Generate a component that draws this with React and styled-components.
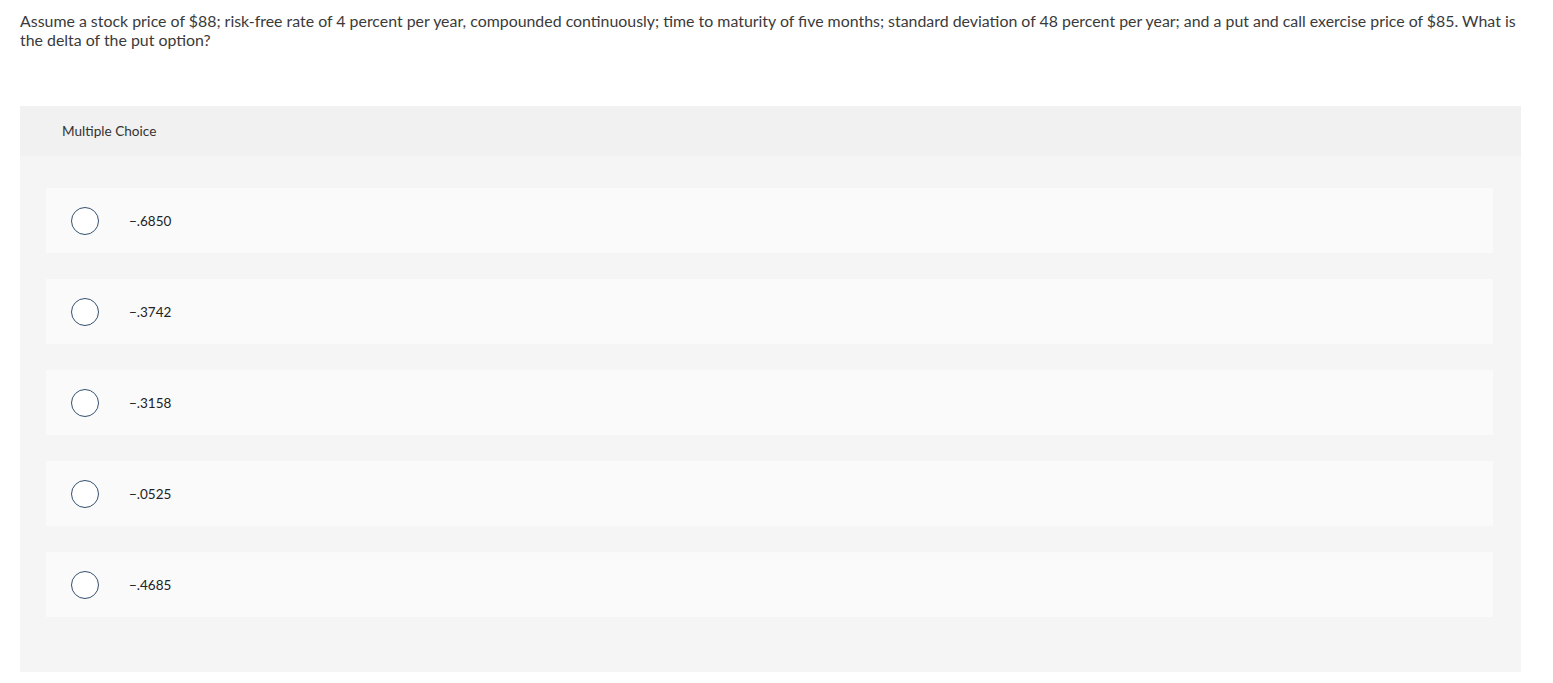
import React from "react";
import styled, { createGlobalStyle } from "styled-components";

const Global = createGlobalStyle`
  body {
    margin: 0;
    background: #fff;
    font-family: Lato, "Open Sans", "Liberation Sans", sans-serif;
    color: #333;
  }
`;

const Page = styled.div`
  padding: 11px 32px 11px 20px;
`;

const Question = styled.p`
  margin: 0 -4px 0 0;
  font-size: 15.9px;
  line-height: 19px;
  color: #3a3a3a;
`;

const Panel = styled.div`
  margin-top: 57px;
  background: #f5f5f5;
  padding-bottom: 55px;
`;

const PanelHeader = styled.div`
  height: 50px;
  background: #f1f1f1;
  display: flex;
  align-items: center;
  padding-left: 42px;
  font-size: 13.6px;
  color: #333;
`;

const Choices = styled.div`
  display: flex;
  flex-direction: column;
  gap: 26px;
  padding: 32px 28px 0 26px;
`;

const Choice = styled.label`
  height: 65px;
  background: #fafafa;
  display: flex;
  align-items: center;
  padding-left: 25px;
  cursor: pointer;
`;

const Radio = styled.span`
  width: 26px;
  height: 26px;
  border-radius: 50%;
  border: 1.2px solid #34506f;
  background: #fff;
  flex-shrink: 0;
`;

const ChoiceText = styled.span`
  margin-left: 30px;
  font-size: 13.5px;
  color: #222;
`;

const options = ["\u2212.6850", "\u2212.3742", "\u2212.3158", "\u2212.0525", "\u2212.4685"];

export default function App() {
  return (
    <>
      <Global />
      <Page>
        <Question>
          Assume a stock price of $88; risk-free rate of 4 percent per year, compounded continuously; time to maturity of five months; standard deviation of 48 percent per year; and a put and call exercise price of $85. What is the delta of the put option?
        </Question>
        <Panel>
          <PanelHeader>Multiple Choice</PanelHeader>
          <Choices>
            {options.map((o) => (
              <Choice key={o}>
                <Radio />
                <ChoiceText>{o}</ChoiceText>
              </Choice>
            ))}
          </Choices>
        </Panel>
      </Page>
    </>
  );
}
